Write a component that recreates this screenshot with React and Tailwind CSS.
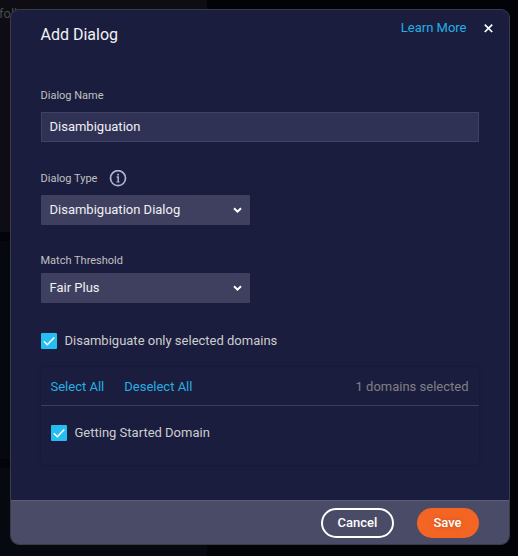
import React from "react";

function Chevron() {
  return (
    <svg width="9" height="7" viewBox="0 0 9 7" className="mt-px shrink-0" fill="none" stroke="#fff" strokeWidth="2">
      <path d="M1 1.2 4.5 4.7 8 1.2" />
    </svg>
  );
}

function Select({ value }) {
  return (
    <div className="flex h-[30px] w-[209px] items-center justify-between rounded-[1px] bg-[#3f405f] pr-2 pl-[8.5px] text-[13px] text-[#f0f0f4]">
      <span>{value}</span>
      <Chevron />
    </div>
  );
}

function Check({ label }) {
  return (
    <label className="flex h-4 items-center gap-[7.5px] text-[13px] leading-4 text-[#cdcdcd]">
      <span className="flex size-4 items-center justify-center rounded-[1px] bg-[#26bdf2]">
        <svg width="16" height="16" viewBox="0 0 16 16" fill="none" stroke="#fff" strokeWidth="1.5">
          <path d="M2.8 8.3 6.3 11.8 13.3 4.6" />
        </svg>
      </span>
      <span>{label}</span>
    </label>
  );
}

function Label({ children }) {
  return <div className="-ml-[0.5px] text-[11px] leading-4 text-[#c0c0c0]">{children}</div>;
}

function Backdrop() {
  return (
    <div className="absolute inset-0 flex bg-[#020209]">
      <div className="flex h-full w-[207px] flex-col bg-[#03030a]">
        <div className="h-[232px] bg-[#0d0d13] text-[13px] leading-4 text-[#4a4a4e]">
          <div className="-ml-px pt-[6px]">follow</div>
        </div>
        <div className="mt-[9px] h-[218px] bg-[#05080f]" />
        <div className="mt-[9px] flex-1 bg-[#060910]" />
      </div>
    </div>
  );
}

export default function App() {
  return (
    <div className="relative h-[556px] w-[518px] overflow-hidden font-['Roboto',sans-serif]">
      <Backdrop />
      <div className="relative mt-[9px] ml-[10px] flex h-[536px] w-[500px] flex-col overflow-hidden rounded-[9px] border border-[#3b3b47] bg-[#1b1d3f]">
        <div className="flex h-[78px] justify-between pr-[16.5px] pl-[29.5px]">
          <h1 className="pt-[15px] text-[16px] leading-5 text-[#f2f2f5]">Add Dialog</h1>
          <div className="flex h-9 items-center gap-[17px]">
            <a className="text-[13px] text-[#26afe0]">Learn More</a>
            <svg width="9" height="9" viewBox="0 0 9 9" stroke="#fff" strokeWidth="1.7">
              <path d="M.8.6 8.2 8M8.2.6.8 8" />
            </svg>
          </div>
        </div>
        <div className="flex flex-1 flex-col pr-[30px] pl-[30px]">
          <Label>Dialog Name</Label>
          <div className="mt-2 flex h-[30px] items-center border border-[#414263] bg-[#303255] pl-[7.5px] text-[13px] text-[#f0f0f4]">
            Disambiguation
          </div>
          <div className="mt-7 flex h-4 items-center gap-3">
            <div className="pt-0.5">
              <Label>Dialog Type</Label>
            </div>
            <svg width="18" height="17" viewBox="0 0 18 17" fill="none" stroke="#b3b4d0">
              <circle cx="9" cy="8.2" r="7.5" strokeWidth="1.7" />
              <path d="M7.6 6.9h1.6v5.2" strokeWidth="1.5" />
              <path d="M7.4 12h3.2" strokeWidth="1" />
              <path d="M8.2 4.6h1.8" strokeWidth="1.6" />
            </svg>
          </div>
          <div className="mt-[9px]">
            <Select value="Disambiguation Dialog" />
          </div>
          <div className="mt-7 mb-1">
            <Label>Match Threshold</Label>
          </div>
          <Select value="Fair Plus" />
          <div className="mt-[30px]">
            <Check label="Disambiguate only selected domains" />
          </div>
          <div className="mt-[18px] h-[98px] rounded-[4px] shadow-[0_0_4px_1px_rgba(0,0,0,0.13)]">
            <div className="flex h-[39px] items-center gap-5 border-b border-[#3c3d58] pr-[10.5px] pl-[10px] pt-px text-[13px] text-[#26afe0]">
              <span className="-ml-[0.5px]">Select All</span>
              <span>Deselect All</span>
              <span className="ml-auto text-[#808082]">1 domains selected</span>
            </div>
            <div className="pt-[19px] pl-[10px]">
              <Check label="Getting Started Domain" />
            </div>
          </div>
        </div>
        <div className="flex h-11 items-center justify-end gap-[23px] border-t border-[#5c5d77] bg-[#4a4b66] pt-px pr-[30px] text-[13px] font-medium text-white">
          <button className="h-[30px] w-[73px] rounded-full border-2 border-white">Cancel</button>
          <button className="h-[30px] w-[62px] rounded-full bg-[#f46524] pr-px [text-shadow:0_0_5px_rgba(0,0,0,0.25)]">Save</button>
        </div>
      </div>
    </div>
  );
}
